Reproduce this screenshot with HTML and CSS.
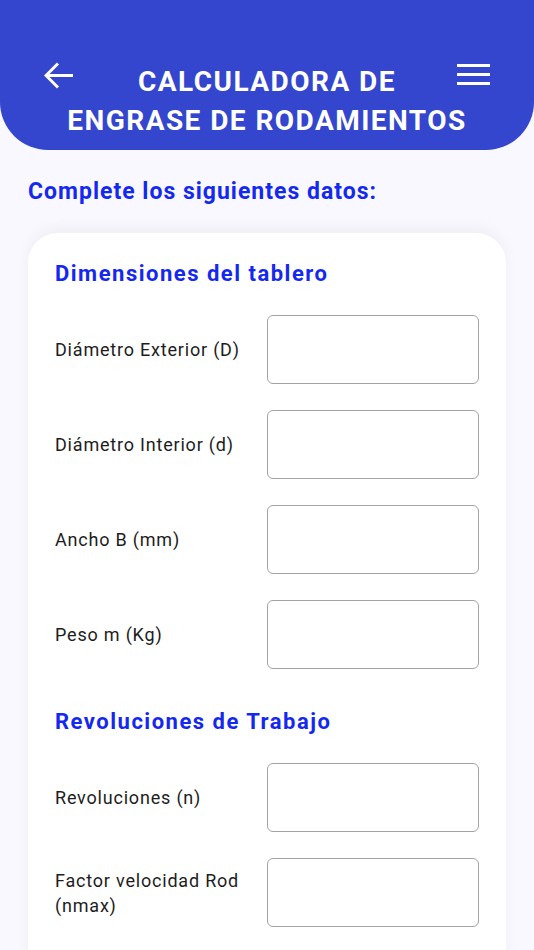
FILE: index.html
```html
<!DOCTYPE html>
<html lang="es">
<head>
    <meta charset="UTF-8">
    <meta name="viewport" content="width=device-width, initial-scale=1.0">
    <title>Calculadora de Engrase de Rodamientos</title>
    <link rel="stylesheet" href="styles.css">
</head>
<body>
    <header class="app-bar">
        <div class="app-bar-inner">
            <!-- Back button -->
            <button class="icon-btn back-btn" aria-label="Volver">
                <svg width="30" height="27" viewBox="0 0 30 27">
                    <path d="M14 1.5 L2 13.5 L14 25.5 M2 13.5 H29" fill="none" stroke="#fff" stroke-width="3"/>
                </svg>
            </button>
            <h1 class="app-title">CALCULADORA DE<br>ENGRASE DE RODAMIENTOS</h1>
            <!-- Menu button -->
            <button class="icon-btn menu-btn" aria-label="Menú">
                <svg width="33" height="21" viewBox="0 0 33 21">
                    <path d="M0 1.5 H33 M0 10.5 H33 M0 19.5 H33" fill="none" stroke="#fff" stroke-width="3"/>
                </svg>
            </button>
        </div>
    </header>

    <main class="content">
        <p class="intro">Complete los siguientes datos:</p>

        <section class="card">
            <h2 class="section-title">Dimensiones del tablero</h2>
            <div class="fields">
                <label class="field-row">
                    <span class="field-label">Diámetro Exterior (D)</span>
                    <input type="text" class="field-input">
                </label>
                <label class="field-row">
                    <span class="field-label">Diámetro Interior (d)</span>
                    <input type="text" class="field-input">
                </label>
                <label class="field-row">
                    <span class="field-label">Ancho B (mm)</span>
                    <input type="text" class="field-input">
                </label>
                <label class="field-row">
                    <span class="field-label">Peso m (Kg)</span>
                    <input type="text" class="field-input">
                </label>
            </div>

            <h2 class="section-title second">Revoluciones de Trabajo</h2>
            <div class="fields">
                <label class="field-row">
                    <span class="field-label">Revoluciones (n)</span>
                    <input type="text" class="field-input">
                </label>
                <label class="field-row">
                    <span class="field-label">Factor velocidad Rod (nmax)</span>
                    <input type="text" class="field-input">
                </label>
            </div>
        </section>
    </main>
</body>
</html>
```

FILE: styles.css
```css
body {
    margin: 0;
    font-family: Roboto, "Liberation Sans", Arial, sans-serif;
    background-color: #f9f8fe;
    color: #1d1d1d;
    height: 950px;
    overflow: hidden;
}

.app-bar {
    background-color: #3346cd;
    height: 150px;
    border-radius: 0 0 48px 48px;
    box-sizing: border-box;
    padding-top: 62px;
}

.app-bar-inner {
    display: grid;
    padding: 0 44px 0 44px;
}

.app-bar-inner > * {
    grid-area: 1 / 1;
}

.icon-btn {
    background: none;
    border: none;
    padding: 0;
    cursor: pointer;
    display: flex;
}

.back-btn {
    justify-self: start;
    align-self: start;
}

.menu-btn {
    justify-self: end;
    align-self: start;
    margin-top: 2px;
}

.app-title {
    justify-self: center;
    margin: 0;
    color: #fff;
    font-size: 28px;
    font-weight: 700;
    line-height: 39px;
    letter-spacing: 1.45px;
    text-align: center;
    white-space: nowrap;
}

.content {
    padding: 0 28px;
}

.intro {
    margin: 28px 0 0 0;
    color: #1428f0;
    font-size: 23px;
    font-weight: 700;
    line-height: 28px;
    letter-spacing: 1px;
}

.card {
    margin-top: 27px;
    background-color: #fff;
    border-radius: 30px 30px 0 0;
    padding: 28px 27px 40px 27px;
    box-shadow: 0 -6px 14px rgba(0, 0, 0, 0.04);
}

.section-title {
    margin: 0 0 28px 0;
    color: #1428f0;
    font-size: 22px;
    font-weight: 700;
    line-height: 26px;
    letter-spacing: 1.5px;
}

.section-title.second {
    margin-top: 40px;
}

.fields {
    display: flex;
    flex-direction: column;
    gap: 26px;
}

.field-row {
    display: flex;
    align-items: center;
    justify-content: space-between;
}

.field-label {
    flex: 1;
    font-size: 18px;
    line-height: 25px;
    letter-spacing: 0.8px;
    padding-right: 20px;
}

.field-input {
    width: 212px;
    height: 69px;
    box-sizing: border-box;
    border: 1.5px solid #a3a3a3;
    border-radius: 6px;
    background: #fff;
    font-size: 18px;
    padding: 0 12px;
}
```
